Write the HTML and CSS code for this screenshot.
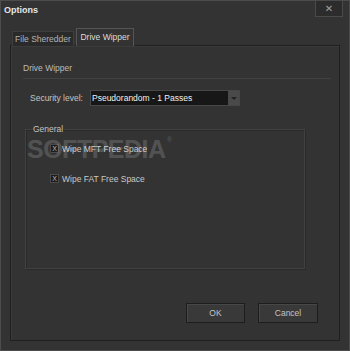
FILE: index.html
```html
<!DOCTYPE html>
<html lang="en">
<head>
  <meta charset="UTF-8">
  <title>Options</title>
  <link rel="stylesheet" href="styles.css">
</head>
<body>

<div class="window">
  <div class="titlebar">
    <span class="title">Options</span>
    <button class="close-btn">&#x2715;</button>
  </div>

  <div class="tabs">
    <div class="tab">File Sheredder</div>
    <div class="tab active">Drive Wipper</div>
  </div>

  <div class="pane">
    <div class="section-title">Drive Wipper</div>

    <div class="field-row">
      <span class="field-label">Security level:</span>
      <div class="combo">
        <span class="combo-text">Pseudorandom - 1 Passes</span>
        <span class="combo-arrow"></span>
      </div>
    </div>

    <fieldset class="group">
      <legend>General</legend>
      <label class="check"><span class="check-box">X</span>Wipe MFT Free Space</label>
      <label class="check"><span class="check-box">X</span>Wipe FAT Free Space</label>
    </fieldset>

    <div class="actions">
      <button class="btn ok">OK</button>
      <button class="btn">Cancel</button>
    </div>
  </div>

  <div class="watermark">SOFTPEDIA<span class="reg">&reg;</span></div>
</div>

</body>
</html>
```

FILE: styles.css
```css
body {
  margin: 0;
  background-color: #333333;
  font-family: "Liberation Sans", Arial, sans-serif;
  font-size: 8.5px;
  color: #c4c4c4;
}
.window {
  position: relative;
  width: 350px;
  height: 351px;
  box-sizing: border-box;
  border: 1px solid #4c4c4c;
  background-color: #333333;
}
.titlebar {
  display: flex;
  justify-content: space-between;
  align-items: flex-start;
  height: 27px;
}
.title {
  margin: 4px 0 0 3px;
  font-size: 9px;
  font-weight: bold;
  color: #e6e6e6;
}
.close-btn {
  width: 28px;
  height: 17px;
  margin: -1px 6px 0 0;
  padding: 0;
  border: 1px solid #4a4a4a;
  background-color: #2c2c2c;
  color: #a0a0a0;
  font-family: "DejaVu Sans", sans-serif;
  font-size: 10px;
  font-weight: bold;
  line-height: 15px;
}
.tabs {
  display: flex;
  align-items: flex-end;
  margin-left: 11px;
  height: 17px;
}
.tab {
  box-sizing: border-box;
  width: 62px;
  height: 15px;
  margin-bottom: -1px;
  border: 1px solid #3e3e3e;
  border-bottom: none;
  background-color: #2a2a2a;
  color: #b4b4b4;
  text-align: center;
  line-height: 14px;
}
.tab.active {
  position: relative;
  width: 58px;
  height: 18px;
  margin-left: 2px;
  border-color: #555555;
  background-color: #333333;
  color: #dcdcdc;
  line-height: 16px;
  z-index: 1;
}
.pane {
  display: flex;
  flex-direction: column;
  box-sizing: border-box;
  width: 330px;
  height: 296px;
  margin-left: 9px;
  border: 1px solid #1f1f1f;
  box-shadow: inset 1px 1px 0 #3b3b3b;
}
.section-title {
  margin: 17px 8px 0 12px;
  padding-bottom: 4px;
  border-bottom: 1px solid #424242;
  line-height: 11px;
  color: #bcbcbc;
}
.field-row {
  display: flex;
  align-items: center;
  margin: 11px 0 0 19px;
  height: 16px;
}
.field-label {
  width: 60px;
}
.combo {
  display: flex;
  box-sizing: border-box;
  width: 150px;
  height: 16px;
  border: 1px solid #474747;
  background-color: #171717;
}
.combo-text {
  flex: 1;
  padding-left: 1px;
  line-height: 14px;
  color: #f0f0f0;
}
.combo-arrow {
  position: relative;
  width: 11px;
  background-color: #4a4a4a;
}
.combo-arrow::after {
  content: "";
  position: absolute;
  left: 3px;
  top: 6px;
  border-left: 3px solid transparent;
  border-right: 3px solid transparent;
  border-top: 3px solid #222222;
}
.group {
  box-sizing: border-box;
  width: 280px;
  height: 145px;
  margin: 18px 0 0 14px;
  padding: 10px 0 0 24px;
  border: 1px solid #414141;
  box-shadow: 1px 1px 0 #2a2a2a, inset 1px 1px 0 #2a2a2a;
  display: flex;
  flex-direction: column;
  gap: 21px;
}
.group legend {
  margin-left: -18px;
  padding: 0 1px;
  color: #c4c4c4;
}
.check {
  display: flex;
  align-items: center;
  gap: 3px;
  height: 9px;
  color: #c8c8c8;
}
.check-box {
  box-sizing: border-box;
  width: 9px;
  height: 9px;
  border: 1px solid #4a4a4a;
  background-color: #1c1c1c;
  color: #bdbdbd;
  font-size: 7px;
  line-height: 7px;
  text-align: center;
}
.actions {
  display: flex;
  justify-content: flex-end;
  gap: 13px;
  margin: 34px 21px 0 0;
}
.btn {
  width: 60px;
  height: 20px;
  padding: 0;
  border: 1px solid #1d1d1d;
  background-color: #393939;
  box-shadow: inset 1px 1px 0 #474747;
  color: #c4c4c4;
  font-family: "Liberation Sans", Arial, sans-serif;
  font-size: 8.5px;
}
.btn.ok {
  width: 59px;
}
.watermark {
  position: absolute;
  left: 26px;
  top: 134px;
  font-family: "Liberation Sans", Arial, sans-serif;
  font-size: 25px;
  font-weight: bold;
  letter-spacing: -0.5px;
  color: rgba(255, 255, 255, 0.18);
  pointer-events: none;
}
.reg {
  vertical-align: top;
  font-size: 8px;
  font-weight: normal;
  margin-left: 1px;
}
```
